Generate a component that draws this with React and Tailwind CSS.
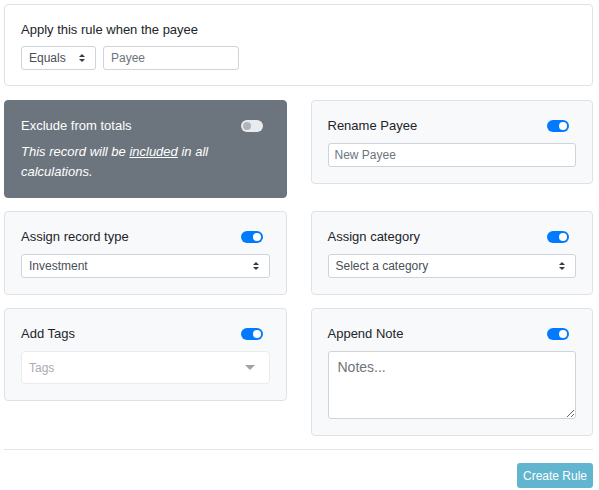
import React from 'react';

const font = { fontFamily: '"Liberation Sans", Arial, sans-serif' };

const Toggle = ({ on = true }) => (
  <span
    className={`relative inline-block w-[22px] h-[12px] rounded-full shrink-0 ${
      on ? 'bg-[#007bff]' : 'bg-[#e9ecef]'
    }`}
  >
    <span
      className={`absolute top-[2px] w-[8px] h-[8px] rounded-full ${
        on ? 'left-[12px] bg-white' : 'left-[2px] bg-[#adb5bd]'
      }`}
    />
  </span>
);

const UpDown = () => (
  <svg width="8" height="10" viewBox="0 0 8 10" className="shrink-0">
    <path d="M4 1 L7 4 L1 4 Z" fill="#343a40" />
    <path d="M4 9 L7 6 L1 6 Z" fill="#343a40" />
  </svg>
);

const SelectBox = ({ label, className = '' }) => (
  <div
    className={`h-[24px] flex items-center justify-between pl-[7px] pr-[9px] bg-white border border-[#ced4da] rounded-[3px] text-[12px] text-[#495057] ${className}`}
  >
    <span>{label}</span>
    <UpDown />
  </div>
);

const Card = ({ title, children, dark = false }) => (
  <div
    className={`rounded-[4px] px-[16px] pt-[16px] pb-[16px] border ${
      dark ? 'bg-[#6c757d] border-[#6c757d] text-white' : 'bg-[#f8f9fa] border-[#dee2e6] text-[#212529]'
    }`}
  >
    <div className="flex items-center justify-between h-[18px] text-[13px] pr-[7px]">
      <span>{title}</span>
      <Toggle on={!dark} />
    </div>
    {children}
  </div>
);

const App = () => {
  return (
    <div className="bg-white w-[599px] h-[490px] pl-[4px] pr-[6px] pt-[4px]" style={font}>
      {/* payee condition */}
      <div className="border border-[#dee2e6] rounded-[4px] px-[16px] pt-[16px] pb-[15px]">
        <div className="h-[18px] flex items-center text-[13px] text-[#212529]">
          Apply this rule when the payee
        </div>
        <div className="flex gap-[7px] mt-[7px]">
          <SelectBox label="Equals" className="w-[75px]" />
          <input
            placeholder="Payee"
            className="h-[24px] w-[136px] px-[7px] bg-white border border-[#ced4da] rounded-[3px] text-[12px] placeholder:text-[#6c757d] outline-none"
          />
        </div>
      </div>

      <div className="grid grid-cols-2 gap-x-[24px] gap-y-[13px] mt-[14px] items-start">
        <Card title="Exclude from totals" dark>
          <p className="mt-[7px] text-[13px] italic leading-[19.5px] text-white">
            This record will be <span className="underline">included</span> in all calculations.
          </p>
        </Card>

        <Card title="Rename Payee">
          <input
            placeholder="New Payee"
            className="mt-[8px] block w-full h-[24px] px-[6px] bg-white border border-[#ced4da] rounded-[3px] text-[12px] placeholder:text-[#6c757d] outline-none"
          />
        </Card>

        <Card title="Assign record type">
          <SelectBox label="Investment" className="mt-[8px] w-full" />
        </Card>

        <Card title="Assign category">
          <SelectBox label="Select a category" className="mt-[8px] w-full" />
        </Card>

        <Card title="Add Tags">
          <div className="mt-[8px] h-[33px] flex items-center justify-between pl-[7px] pr-[14px] bg-white border border-[#e9ecef] rounded-[4px] text-[12px] text-[#a8acb0]">
            <span>Tags</span>
            <svg width="10" height="6" viewBox="0 0 10 6">
              <path d="M0 0 L10 0 L5 5 Z" fill="#a0a4a8" />
            </svg>
          </div>
        </Card>

        <Card title="Append Note">
          <textarea
            placeholder="Notes..."
            className="mt-[8px] block w-full h-[68px] px-[9px] py-[5px] bg-white border border-[#ced4da] rounded-[3px] text-[14px] placeholder:text-[#6c757d] outline-none"
          />
        </Card>
      </div>

      <div className="mt-[13px] border-t border-[#e5e5e5]" />

      <div className="flex justify-end mt-[13px]">
        <button className="h-[25px] px-[6px] rounded-[3px] bg-[#62b5cf] text-white text-[12px]">
          Create Rule
        </button>
      </div>
    </div>
  );
};

export default App;
